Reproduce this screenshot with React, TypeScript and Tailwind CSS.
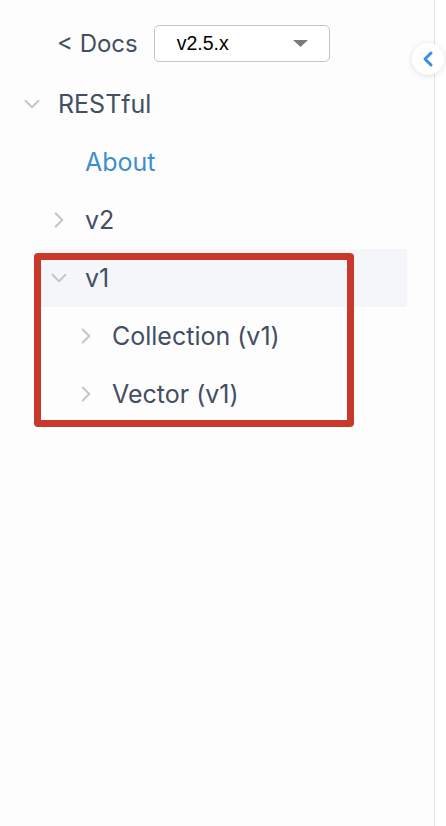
import React from "react";
import { ChevronDown, ChevronRight, ChevronLeft } from "lucide-react";

type Node = {
  label: string;
  depth: number;
  open?: boolean;
  leaf?: boolean;
  active?: boolean;
  selected?: boolean;
};

const children: Node[] = [
  { label: "About", depth: 1, leaf: true, active: true },
  { label: "v2", depth: 1 },
  { label: "v1", depth: 1, open: true, selected: true },
  { label: "Collection (v1)", depth: 2 },
  { label: "Vector (v1)", depth: 2 },
];

const Caret = ({ open }: { open?: boolean }) => (
  <span className="flex w-[13px] shrink-0 justify-center text-[#c3c6cc]">
    {open ? (
      <ChevronDown size={26} strokeWidth={1.9} className="shrink-0" />
    ) : (
      <ChevronRight size={26} strokeWidth={1.9} className="shrink-0" />
    )}
  </span>
);

const Row = ({ node }: { node: Node }) => {
  const pad = node.depth === 1 ? "pl-[17px]" : "pl-[44px]";
  return (
    <div
      className={`flex h-[58px] items-center gap-[20px] ${pad} ${
        node.selected ? "bg-[#f5f6fa]" : ""
      }`}
    >
      {node.leaf ? <span className="w-[13px] shrink-0" /> : <Caret open={node.open} />}
      <span
        className={`text-[25px] leading-none ${
          node.active ? "text-[#3d8fcf]" : "text-[#434f62]"
        }`}
      >
        {node.label}
      </span>
    </div>
  );
};

export default function App() {
  return (
    <div className="relative h-[826px] w-[446px] overflow-hidden bg-white font-['Inter',sans-serif]">
      <aside className="h-full w-[435px] border-r border-[#e4e3ee] bg-[#fdfdfd]">
        <div className="flex items-center gap-[16px] pl-[57px] pt-[25px]">
          <span className="text-[24px] leading-none text-[#434f62]">&lt; Docs</span>
          <div className="flex h-[37px] w-[176px] items-center justify-between rounded-[5px] border border-[#c4c4c4] bg-white pl-[22px] pr-[21px]">
            <span className="font-['Liberation_Sans',sans-serif] text-[19.5px] text-black">
              v2.5.x
            </span>
            <svg width="15" height="7" viewBox="0 0 15 7">
              <polygon points="0,0 15,0 7.5,7" fill="#7a7a7a" />
            </svg>
          </div>
        </div>

        <nav className="mt-[13px]">
          <div className="flex h-[58px] items-center gap-[20px] pl-[25px]">
            <Caret open />
            <span className="text-[25px] leading-none text-[#434f62]">RESTful</span>
          </div>
          <div className="ml-[35px] mr-[27px]">
            {children.map((n) => (
              <Row key={n.label} node={n} />
            ))}
          </div>
        </nav>
      </aside>

      {/* collapse toggle */}
      <button className="absolute left-[412px] top-[43px] flex h-[32px] w-[32px] items-center justify-center rounded-full bg-white text-[#3a8ee6] shadow-[0_1px_6px_rgba(0,0,0,0.12)]">
        <ChevronLeft size={24} strokeWidth={3} className="shrink-0" />
      </button>

      {/* annotation */}
      <div className="pointer-events-none absolute left-[34px] top-[253px] h-[174px] w-[320px] rounded-[4px] border-[7px] border-[#c9392b]" />
    </div>
  );
}
